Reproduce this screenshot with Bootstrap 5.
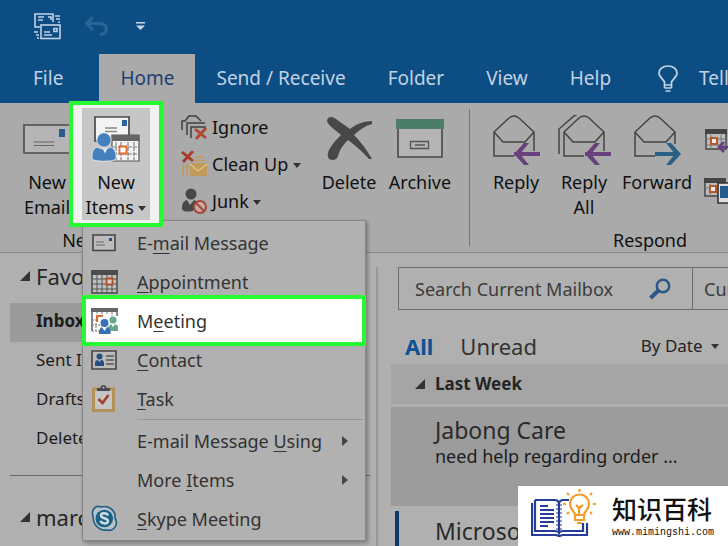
<!DOCTYPE html>
<html lang="en">
<head>
<meta charset="utf-8">
<meta name="viewport" content="width=device-width, initial-scale=1">
<title>Outlook - New Items menu</title>
<link rel="stylesheet" href="https://cdn.jsdelivr.net/npm/bootstrap@5.3.0/dist/css/bootstrap.min.css">
<style>
  :root { --blue: #0c4e84; --ribbon: #aaaaaa; --pane: #b0b0b0; --line: #8a8a8a; --green: #26fb32; }
  body { font-family: "Noto Sans", "Open Sans", sans-serif; font-size: 18px; line-height: 24px; color: #1c1c1c; background: var(--pane); overflow: hidden; }
  svg { display: block; flex: none; }
  button { font: inherit; color: inherit; background: none; border: 0; padding: 0; }
  a { color: inherit; text-decoration: none; }

  .topbar { background: var(--blue); color: #c3d2e2; }
  .quick { height: 54px; padding: 12px 34px 0; }
  .tabs { height: 49px; font-size: 19px; padding-left: 12px; overflow: hidden; }
  .tabs a { padding: 0 21px; height: 49px; line-height: 49px; }
  .tabs .current { background: var(--ribbon); color: #1f3f70; margin: 0 0 0 15px; }
  .tabs .tell { padding: 0 0 0 26px; gap: 21px; }

  .ribbon { background: var(--ribbon); padding-top: 5px; border-bottom: 1px solid var(--line); color: #111; }
  .ribbon-group { height: 144px; }
  .big { line-height: 25px; text-align: center; }
  .big .pic { height: 62px; padding-top: 7px; display: flex; justify-content: center; }
  .group-name { margin-top: 8px; line-height: 24px; text-align: center; }
  .vrule { width: 1px; height: 137px; background: #777; margin-top: 1px; }
  .group-new { width: 162px; margin-right: 19px; }
  .group-delete { width: 288px; }
  .group-respond { flex: 1 0 0; min-width: 0; overflow: hidden; }
  .respond-inner { width: 360px; }
  .new-email { width: 94px; flex: none; }
  .new-items { margin: -7px 0 -7px -25px; }
  .framed { border: 4px solid var(--green); background: #f1f1f1; padding: 3px 9px; z-index: 1030; }
  .framed .big { background: #c6c6c6; width: 68px; white-space: nowrap; }
  .small-list { width: 137px; gap: 13px; padding-top: 7px; }
  .small-list button { gap: 4px; height: 24px; }
  .w-delete { width: 62px; }
  .w-archive { width: 80px; }
  .w-reply { width: 68px; }
  .w-forward { width: 78px; }
  .caret { border: 4px solid transparent; border-top: 5px solid #333; border-bottom: 0; display: inline-block; vertical-align: 3px; }

  .item-menu { left: 13px; top: calc(100% - 7px); width: 284px; padding: 2px; border: 1px solid #858585; border-radius: 0; background: #b1b1b1; box-shadow: 2px 2px 4px rgba(0,0,0,.3); font-size: 18px; color: #333; z-index: 1020; margin: 0; }
  .item-menu button { height: 39px; width: 100%; gap: 14px; text-align: left; }
  .item-menu .glyph { width: 38px; display: flex; justify-content: center; }
  .item-menu u { text-underline-offset: 3px; text-decoration-thickness: 1px; }
  .item-menu .picked { position: relative; background: #fff; border: 4px solid var(--green); height: 51px; width: 284px; margin: -6px -3px; padding-right: 0; }
  .item-menu .picked .glyph { width: 37px; }
  .item-menu .rule { height: 1px; margin: 1px 0 1px 52px; background: #959595; }
  .item-menu .arrow { margin-left: auto; margin-right: 15px; border: 5px solid transparent; border-left: 6px solid #444; border-right: 0; }

  .folders { width: 376px; padding: 3px 6px 0 10px; }
  .folders h2, .group-head { margin: 0; font-weight: 400; }
  .folders h2 { font-size: 22px; line-height: 40px; padding-left: 10px; gap: 6px; color: #262626; }
  .folders a { display: block; line-height: 36px; padding: 0 0 3px 26px; font-size: 17px; }
  .folders .here { background: #9b9b9b; font-weight: 700; margin: 7px 10px 0 0; }
  .folders hr { margin: 16px 0 21px; border-color: #666; opacity: 1; }
  .divider { width: 2px; background: #989898; margin-top: 14px; }
  .mail { padding: 14px 0 0 13px; min-width: 0; overflow: hidden; }
  .search { height: 43px; margin-left: 7px; border: 1px solid #6d6d6d; border-right: 0; overflow: hidden; }
  .search input { width: 250px; flex: none; border: 0; background: none; padding: 0 0 0 16px; color: #3c3c3c; outline: 0; }
  .search input::placeholder { color: #3c3c3c; opacity: 1; }
  .search .find { width: 44px; flex: none; border-right: 1px solid #6d6d6d; }
  .search .scope { flex: 1 1 0; min-width: 0; overflow: hidden; padding-left: 11px; text-align: left; color: #3c3c3c; white-space: nowrap; }
  .filters { height: 54px; padding: 16px 9px 0 14px; font-size: 22px; line-height: 40px; color: #333; }
  .filters .all { color: #0c5293; font-weight: 700; margin-right: 27px; }
  .filters .by-date { font-size: 17px; color: #222; }
  .group-head { height: 40px; background: #a5a5a5; font-size: 17px; font-weight: 700; padding-left: 24px; gap: 10px; color: #252525; }
  .message { display: block; padding: 9px 0 0 44px; color: #1c1c1c; white-space: nowrap; }
  .message b { display: block; font-weight: 400; font-size: 23px; line-height: 28px; color: #2a2a2a; }
  .message small { display: block; font-size: 18px; line-height: 24px; }
  .message.chosen { background: #9c9c9c; margin-top: 3px; height: 99px; }
  .message.unread { margin: 5px 0 0 4px; border-left: 4px solid #0b3a68; padding: 6px 0 0 36px; height: 60px; }

  .brand { background: #fff; width: 210px; height: 60px; z-index: 1040; padding: 3px 0 0 13px; gap: 16px; color: #111; }
  .brand strong { display: block; font: 500 25px/38px "Noto Sans CJK SC", sans-serif; }
  .brand span { display: block; font: 400 10px/12px "Liberation Mono", monospace; }
</style>
<script src="https://cdn.jsdelivr.net/npm/bootstrap@5.3.0/dist/js/bootstrap.bundle.min.js"></script>
</head>
<body class="min-vh-100 d-flex flex-column">

<header class="topbar">
  <div class="quick d-flex align-items-start">
    <button aria-label="Send and receive all">
      <svg width="27" height="28" viewBox="0 0 27 28" fill="none" stroke="#c3d2e2" stroke-width="1.6">
        <path d="M6 15H1V2h18v8M4 5h6M4 8h5M14 5h3v3M21 4h5M22 7h4M24 10h2M0 20h4M2 23h3M3 26h2"/>
        <rect x="7" y="13" width="19" height="13.500"/><path d="M10 20h6M10 23h8M20 16.500h3v3h-3z"/>
      </svg>
    </button>
    <button aria-label="Undo" class="ms-4 mt-1 ps-0">
      <svg width="23" height="21" viewBox="0 0 23 21" fill="none" stroke="#2a6595" stroke-width="3"><path d="M8 1 1.500 7.500 8 14M2 7.500h12c6 0 8 3 7 7-1 3-3 4-6 4"/></svg>
    </button>
    <button aria-label="Customize toolbar" class="ms-4 mt-2 ps-1">
      <svg width="9" height="11" viewBox="0 0 9 11" fill="#c9d6e4"><path d="M0 2h9v1.600H0zM0 5.500h9L4.500 10z"/></svg>
    </button>
  </div>
  <nav class="tabs d-flex text-nowrap" aria-label="Ribbon tabs">
    <a href="#">File</a>
    <a href="#" class="current">Home</a>
    <a href="#">Send / Receive</a>
    <a href="#">Folder</a>
    <a href="#">View</a>
    <a href="#">Help</a>
    <a href="#" class="tell d-flex align-items-center">
      <svg width="20" height="28" viewBox="0 0 20 28" fill="none" stroke="#c3d2e2" stroke-width="1.700"><path d="M6.500 20v-3C5 14 1 12 1 8c0-4 4-7 9-7s9 3 9 7c0 4-4 6-5.500 9v3zM6.500 23h7M7.500 26h5M6.500 20v3M13.500 20v3"/></svg>
      Tell me</a>
  </nav>
</header>

<section class="ribbon d-flex" aria-label="Home ribbon">
  <div class="ribbon-group group-new flex-shrink-0">
    <div class="d-flex align-items-start">
      <button class="big new-email">
        <span class="pic"><svg width="48" height="40" viewBox="0 0 48 40"><path d="M1 10h46v28H1z" fill="#b5b5b5" stroke="#4b4b4b" stroke-width="1.600"/><path d="M36 14h6v8h-6z" fill="#2b5a8f"/><path d="M11 27h20M11 30.500h20" stroke="#666" stroke-width="1.200"/></svg></span>
        New<br>Email
      </button>
      <div class="new-items position-relative">
        <div class="framed position-relative">
          <button class="big" aria-expanded="true">
            <span class="pic"><svg width="50" height="48" viewBox="0 0 50 48">
              <path d="M4 2h34v24H4z" fill="#f4f4f4" stroke="#4b4b4b" stroke-width="1.700"/><path d="M31 5h5v6h-5z" fill="#2b64a0"/><path d="M14 13h12M14 16.500h12" stroke="#888" stroke-width="1.300"/>
              <path d="M21 20h27v26H21z" fill="#f4f4f4" stroke="#555" stroke-width="1.200"/><path d="M20.500 20h28v6h-28z" fill="#666"/>
              <path d="M25 27v18M30 27v18M37 27v18M43 27v18M22 32h26M22 39h26" stroke="#777" stroke-width="1.100" stroke-dasharray="4 1"/>
              <path d="M28.500 31.500h7v7h-7z" fill="#fff" stroke="#e06a2a" stroke-width="1.800"/>
              <g fill="#4480bd" stroke="#f0f0f0" stroke-width=".8"><path d="M6 32q7 4 14 0c5 2 5 8 5 12-3 3-21 3-24 0 0-5 0-10 5-12z"/><circle cx="13" cy="25" r="7.200"/></g>
              <path d="M11.500 33.500h5l-2.500 5z" fill="#e9e9e9"/></svg></span>
            New<br>Items <i class="caret"></i>
          </button>
        </div>
        <div class="item-menu dropdown-menu show position-absolute" role="menu">
          <button role="menuitem" class="d-flex align-items-center">
            <span class="glyph"><svg width="24" height="18" viewBox="0 0 24 18"><path d="M1 1h22v15.500H1z" fill="#bcbcbc" stroke="#444" stroke-width="1.600"/><path d="M17 4h3v3h-3z" fill="#244f80"/><path d="M4 8h8M4 11h9" stroke="#666" stroke-width="1.200"/></svg></span>
            <span>E-<u>m</u>ail Message</span></button>
          <button role="menuitem" class="d-flex align-items-center">
            <span class="glyph"><svg width="27" height="24" viewBox="0 0 27 24"><path d="M1 1h25v22H1z" fill="#c0c0c0" stroke="#444" stroke-width="1.400"/><path d="M0 0h27v5H0z" fill="#4c4c4c"/><path d="M6 5v18M11 5v18M16 5v18M21 5v18M1 9h25M1 14h25M1 19h25" stroke="#555"/><path d="M15.500 8.500h6v6h-6z" fill="#d8cfc9" stroke="#b64d28" stroke-width="1.800"/></svg></span>
            <span><u>A</u>ppointment</span></button>
          <button role="menuitem" class="picked d-flex align-items-center">
            <span class="glyph"><svg width="27" height="28" viewBox="0 0 27 28"><path d="M1 24V2h25v7" fill="none" stroke="#555" stroke-width="1.400"/><path d="M0 1h27v4H0z" fill="#666"/><path d="M6 5v5M11 5v3M16 5v3M21 5v4M1 13h4M1 18h8M5 16v8M1 24h8" stroke="#777" stroke-dasharray="2 1"/><path d="M12 9H6v6" fill="none" stroke="#e06a35" stroke-width="2.200"/><g fill="#68a88a"><circle cx="22" cy="13" r="3.600"/><path d="M17 24v-4l3-3 2 3 2-3 3 2v5z"/></g><g fill="#376fb0"><circle cx="13.500" cy="16" r="4"/><path d="M8 27c-.5-4 1-6 3-7l2.500 4 2.500-4c3 1 4 3 3.500 7z"/></g></svg></span>
            <span>M<u>e</u>eting</span></button>
          <button role="menuitem" class="d-flex align-items-center">
            <span class="glyph"><svg width="26" height="20" viewBox="0 0 26 20"><path d="M1 1h24v18H1z" fill="#bababa" stroke="#444" stroke-width="1.600"/><g fill="#244f80"><circle cx="8.500" cy="6.500" r="3"/><path d="M4 16v-3c0-2 1-3 3-3l1.500 2 1.500-2c2 0 3 1 3 3v3z"/></g><path d="M15 6h8M15 10h8M15 14h8" stroke="#555" stroke-width="1.300"/></svg></span>
            <span><u>C</u>ontact</span></button>
          <button role="menuitem" class="d-flex align-items-center">
            <span class="glyph"><svg width="24" height="27" viewBox="0 0 24 27"><path d="M1.500 4h20v21.500h-20z" fill="#c6c6c6" stroke="#b5915a" stroke-width="3"/><path d="M5 6V3h3.500a3 3 0 0 1 6 0H18v3z" fill="#444b57"/><circle cx="11.500" cy="2.500" r="1" fill="#bbb"/><path d="m6.500 14 4 4 6-8" fill="none" stroke="#a83d2c" stroke-width="2.600"/></svg></span>
            <span><u>T</u>ask</span></button>
          <div class="rule"></div>
          <button role="menuitem" class="d-flex align-items-center"><span class="glyph"></span><span>E-mail Message <u>U</u>sing</span><i class="arrow"></i></button>
          <button role="menuitem" class="d-flex align-items-center"><span class="glyph"></span><span>More <u>I</u>tems</span><i class="arrow"></i></button>
          <button role="menuitem" class="d-flex align-items-center">
            <span class="glyph"><svg width="27" height="27" viewBox="0 0 27 27" fill="none"><path d="M2 11C0 4 5 0 10 2c7-2 15 3 14 11 4 7-2 14-8 12C8 26 2 20 2 11z" fill="#b9c2c8" stroke="#1d5d80" stroke-width="1.600"/><circle cx="13.300" cy="13.500" r="8.800" fill="#1b6287"/><path d="M17 10.500c-1-3-7-3-7 0 0 3.500 7 2 7 5.700 0 3-6.500 3.300-7.500-.4" stroke="#d5dde2" stroke-width="2.400"/></svg></span>
            <span><u>S</u>kype Meeting</span></button>
        </div>
      </div>
    </div>
    <div class="group-name">New</div>
  </div>

  <div class="ribbon-group group-delete d-flex align-items-start flex-shrink-0">
    <div class="small-list d-flex flex-column">
      <button class="d-flex align-items-center"><svg width="27" height="26" viewBox="0 0 27 26" fill="none" stroke="#3f3f3f" stroke-width="1.500"><path d="M1 16V7h3l4-5h7l5 5M6 21V9h18M10 24v-11h15" /><path d="m14 15 11 9M25 14l-10 11" stroke="#b2452f" stroke-width="2.800"/></svg>Ignore</button>
      <button class="d-flex align-items-center"><svg width="27" height="26" viewBox="0 0 27 26" fill="none"><path d="M9 12h17v13H9z" fill="#c09a58"/><path d="m9 13 8 7 9-7" stroke="#e0c48e" stroke-width="1.300"/><path d="M2 14v10M6 13v11M15 6h8M14 9.500h11" stroke="#c09a58" stroke-width="1.700"/><path d="m1 1 11 9M12 0 2 11" stroke="#a93a28" stroke-width="2.800"/></svg><span>Clean Up <i class="caret"></i></span></button>
      <button class="d-flex align-items-center"><svg width="27" height="26" viewBox="0 0 27 26"><g fill="#484848"><circle cx="10" cy="6" r="5.500"/><path d="M1 21c0-5 1-8 5-9l3 5 4-5 4 2-5 9c-5 1-10 1-11-2z"/></g><g fill="#c5aaa5" stroke="#a84737" stroke-width="2"><circle cx="19" cy="19" r="6"/><path d="m15 15 8 8"/></g></svg><span>Junk<i class="caret ms-1"></i></span></button>
    </div>
    <button class="big w-delete"><span class="pic"><svg width="47" height="46" viewBox="0 0 47 46" fill="#484848"><path d="M1 6C1 1 7 1 10 4l14 10C30 9 38 6 46 6v3c-7 2-13 6-18 11 7 7 13 15 18 24h-3C37 37 30 31 22 25c-5 5-8 9-10 16-1 5-9 5-10 1C0 36 8 27 15 20 10 15 2 11 1 6z"/></svg></span>Delete</button>
    <button class="big w-archive"><span class="pic"><svg width="50" height="46" viewBox="0 0 50 46"><path d="M3 12h44v30H3z" fill="#b4b4b4" stroke="#474747" stroke-width="1.600"/><path d="M1 4h48v10H1z" fill="#4c7d69"/><path d="M15.500 26.500h18v7h-18zM20 30h10" fill="none" stroke="#555" stroke-width="1.300"/></svg></span>Archive</button>
  </div>
  <div class="vrule flex-shrink-0"></div>
  <div class="ribbon-group group-respond">
    <div class="respond-inner">
      <div class="d-flex align-items-start ps-2 ms-1">
        <button class="big w-reply"><span class="pic"><svg width="50" height="52" viewBox="0 0 50 52" fill="none" stroke="#444" stroke-width="1.500"><path d="M43 36V17L28 3q-5-4-10 0L3 17v24h20M3 17l9 10h22l9-10"/><path d="M23 39h26" stroke="#68407e" stroke-width="4"/><path d="m33 28-10 11 10 11h5l-9-11 9-11z" fill="#68407e" stroke="none"/></svg></span>Reply</button>
        <button class="big w-reply"><span class="pic"><svg width="54" height="52" viewBox="0 0 54 52" fill="none" stroke="#444" stroke-width="1.500"><path d="M47 36V17L32 3q-5-4-10 0L7 17v24h20M7 17l9 10h22l9-10M2 39V14L17 1l4-2"/><path d="M28 39h26" stroke="#68407e" stroke-width="4"/><path d="m38 28-10 11 10 11h5l-9-11 9-11z" fill="#68407e" stroke="none"/></svg></span>Reply<br>All</button>
        <button class="big w-forward"><span class="pic"><svg width="50" height="52" viewBox="0 0 50 52" fill="none" stroke="#444" stroke-width="1.500"><path d="M43 29V17L28 3q-5-4-10 0L3 17v24h20M3 17l9 10h22l9-10"/><path d="M23 39h24" stroke="#2a5f88" stroke-width="4"/><path d="m39 28 10 11-10 11h-5l9-11-9-11z" fill="#2a5f88" stroke="none"/></svg></span>Forward</button>
        <div class="d-flex flex-column gap-4 pt-3 ms-2">
          <button aria-label="Meeting reply" class="mt-1"><svg width="27" height="25" viewBox="0 0 27 25"><path d="M2 3h20v18H2z" fill="#bcbcbc" stroke="#444" stroke-width="1.500"/><path d="M1 1h22v5H1z" fill="#444"/><path d="M7 7v14M17 7v14M2 11h20M2 17h20" stroke="#777"/><path d="M7 10h6v6H7z" fill="#eee" stroke="#b9572a" stroke-width="2"/><path d="M15 19h12M20 14l-5 5 5 5" fill="none" stroke="#68407e" stroke-width="2.600"/></svg></button>
          <button aria-label="Share to phone"><svg width="27" height="27" viewBox="0 0 27 27"><path d="M1 3h20v16H1z" fill="#bcbcbc" stroke="#444" stroke-width="1.500"/><path d="M0 1h22v5H0z" fill="#444"/><path d="M1 11h20M6 7v12" stroke="#777"/><path d="M6 9h6v6H6z" fill="#eee" stroke="#b9572a" stroke-width="2"/><path d="M14 6h12v20H14z" fill="#ddd" stroke="#333" stroke-width="1.600"/><path d="M16 9h8v12h-8z" fill="#235a8c"/></svg></button>
        </div>
      </div>
      <div class="group-name">Respond</div>
    </div>
  </div>
</section>

<main class="d-flex flex-grow-1">
  <nav class="folders flex-shrink-0" aria-label="Folders">
    <h2 class="d-flex align-items-center"><svg width="10" height="10" viewBox="0 0 10 10" fill="#333"><path d="M10 0v10H0z"/></svg>Favorites</h2>
    <a href="#" class="here">Inbox</a>
    <a href="#">Sent Items</a>
    <a href="#">Drafts</a>
    <a href="#">Deleted Items</a>
    <hr>
    <h2 class="d-flex align-items-center"><svg width="10" height="10" viewBox="0 0 10 10" fill="#333"><path d="M10 0v10H0z"/></svg>marc</h2>
  </nav>
  <div class="divider flex-shrink-0"></div>
  <section class="mail flex-grow-1" aria-label="Messages">
    <form class="search d-flex">
      <input type="search" aria-label="Search Current Mailbox" placeholder="Search Current Mailbox">
      <button class="find" type="button" aria-label="Search"><svg width="22" height="22" viewBox="0 0 22 22" fill="none" stroke="#2c5786"><circle cx="14" cy="8" r="6.200" stroke-width="2.500"/><path d="m9.500 12.500-8 7.500" stroke-width="4"/></svg></button>
      <button class="scope" type="button">Current Mailbox</button>
    </form>
    <div class="filters d-flex">
      <a href="#" class="all">All</a><a href="#">Unread</a>
      <button class="by-date ms-auto">By Date <i class="caret ms-1"></i></button>
    </div>
    <h3 class="group-head d-flex align-items-center"><svg width="10" height="10" viewBox="0 0 10 10" fill="#333"><path d="M10 0v10H0z"/></svg>Last Week</h3>
    <a href="#" class="message chosen"><b>Jabong Care</b><small>need help regarding order ...</small></a>
    <a href="#" class="message unread"><b>Microsoft</b></a>
  </section>
</main>

<aside class="brand d-flex position-fixed bottom-0 end-0">
  <svg width="65" height="50" viewBox="0 0 65 50" fill="none" stroke="#253c98" stroke-width="2.200">
    <path d="M4 11h20q3 0 4 3 1-3 4-3h6M4 11v31h20q3 0 4 2 1-2 4-2h20V34M1 14v32h24l3 1 4-1h24V34M28 14v30"/>
    <path d="M9 17h8M9 21h14M9 25h14M9 29h14M9 33h14M9 37h8" stroke-width="1.800"/>
    <path d="M25 16h6M25 20h6M25 24h6M25 28h6M25 32h6M25 36h6M25 40h6" stroke-width="1.200"/>
    <g stroke="#f59b2a"><path d="M44 26c0-4-5-5-5-11a9.500 9.500 0 0 1 19 0c0 6-5 7-5 11zM44 26v5h9v-5M46 34h5M48 26v-7M45 16l3 3 4-3M48.500 0v3M36 4l2 2M61 4l-2 2M32 15h3M62 15h3M36 25l2-2M61 25l-2-2"/></g>
  </svg>
  <div class="text-nowrap"><strong lang="zh">知识百科</strong><span>www.mimingshi.com</span></div>
</aside>
</body>
</html>
